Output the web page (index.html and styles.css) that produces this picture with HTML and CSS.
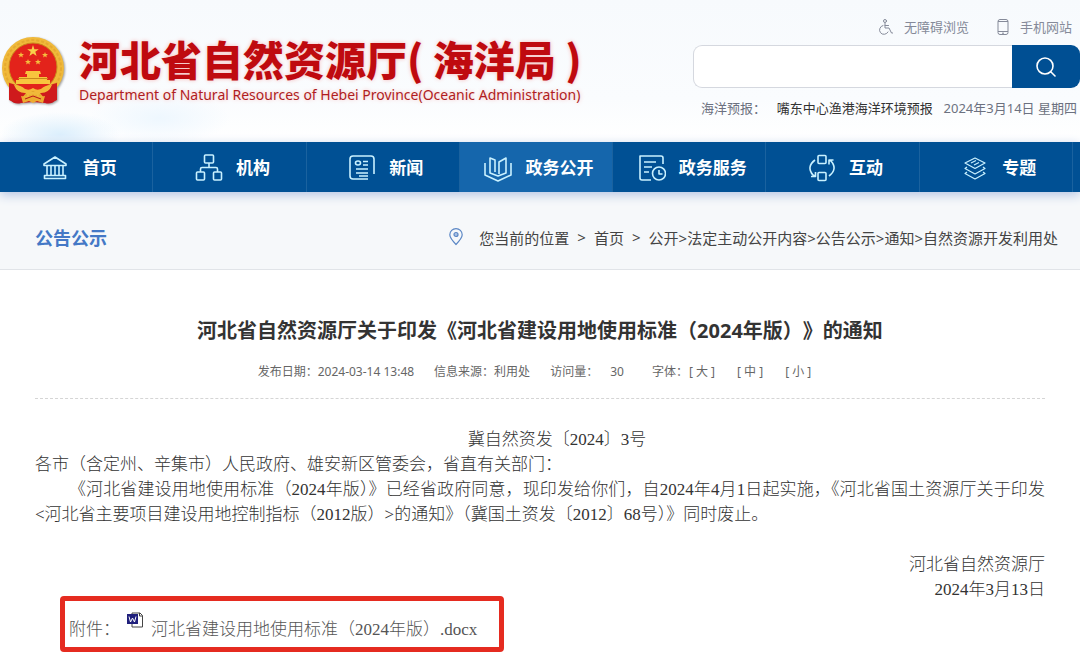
FILE: index.html
```html
<!DOCTYPE html>
<html lang="zh-CN">
<head>
  <meta charset="UTF-8">
  <meta name="viewport" content="width=device-width, initial-scale=1.0">
  <title>河北省自然资源厅(海洋局)</title>
  <link rel="stylesheet" href="styles.css">
</head>
<body>
  <!-- 头部 -->
  <header class="header">
    <a class="logo" href="#">
      <svg class="emblem" viewBox="0 0 64 70" aria-hidden="true">
        <path d="M10 47 L9 64 Q14 69 20 67 L32 66 L44 67 Q50 69 55 64 L56 47z" fill="#c8161d"/>
        <circle cx="32" cy="32" r="31" fill="#f0b93a"/>
        <circle cx="32" cy="32" r="28" fill="none" stroke="#e5aa30" stroke-width="2" stroke-dasharray="3 2"/>
        <circle cx="32" cy="31" r="24" fill="#e3231b" stroke="#c98a1c" stroke-width="1"/>
        <path d="M32 9l1.4 4.2h4.4l-3.5 2.6 1.3 4.2-3.6-2.6-3.6 2.6 1.3-4.2-3.5-2.6h4.4z" fill="#f8d04a"/>
        <g fill="#f5bd3e">
          <path d="M20 16l.8 2h2.2l-1.7 1.4.6 2.2-1.9-1.3-1.9 1.3.6-2.2L17 18h2.2z"/>
          <path d="M44 16l.8 2h2.2l-1.7 1.4.6 2.2-1.9-1.3-1.9 1.3.6-2.2L41 18h2.2z"/>
          <path d="M27 23l.8 2h2.2l-1.7 1.4.6 2.2-1.9-1.3-1.9 1.3.6-2.2L24 25h2.2z"/>
          <path d="M37 23l.8 2h2.2l-1.7 1.4.6 2.2-1.9-1.3-1.9 1.3.6-2.2L34 25h2.2z"/>
        </g>
        <path d="M25 35h14l1 3h-2v3h8v3h3v4H15v-4h3v-3h8v-3h-2z" fill="#f8c53e"/>
        <path d="M17 42.500h30" stroke="#c98a1c"/>
        <path d="M8 47q7 1 11 6l6 4-5 6q-6 4-12 1zM56 47q-7 1-11 6l-6 4 5 6q6 4 12 1z" fill="#cf1a1c"/>
        <path d="M13 49q7 0 11 4 4 2 8-1 4 3 8 1 4-4 11-4-3 8-11 8-5 0-8-2-3 2-8 2-8 0-11-8z" fill="#f4b838"/>
        <path d="M20 60l7 1 5-3 5 3 7-1-2 7-6-2-4 2-4-2-6 2z" fill="#edaa30"/>
        <path d="M24 63l8-3 8 3" stroke="#b9151a" fill="none"/>
      </svg>
      <span class="logo-text">
        <strong class="logo-cn">河北省自然资源厅( 海洋局 )</strong>
        <span class="logo-en">Department of Natural Resources of Hebei Province(Oceanic Administration)</span>
      </span>
    </a>
    <div class="tools">
      <div class="links">
        <a href="#">
          <svg width="16" height="16" viewBox="0 0 16 16" fill="none" stroke="#858a99" stroke-linecap="round" stroke-linejoin="round"><circle cx="8" cy="2" r="1.500"/><path d="M8 4v5h4l2.500 5H16M8 6.500h3.500M6 6.500a4.500 4.500 0 1 0 5 6.500"/></svg>
          无障碍浏览
        </a>
        <a href="#">
          <svg width="12" height="16" viewBox="0 0 12 16" fill="none" stroke="#858a99"><rect x="1" y=".5" width="10" height="15" rx="2"/><path d="M1 2.500h10M1 12.500h10M5 14.200h2"/></svg>
          手机网站
        </a>
      </div>
      <form class="search" action="#">
        <input type="text" aria-label="搜索">
        <button type="submit" aria-label="搜索">
          <svg width="22" height="22" viewBox="0 0 22 22" fill="none" stroke="#fff" stroke-width="1.600" stroke-linecap="round"><circle cx="10" cy="10" r="8"/><path d="M16 16l4 4"/></svg>
        </button>
      </form>
      <div class="forecast">
        <span>海洋预报：</span>
        <a href="#">嘴东中心渔港海洋环境预报</a>
        <span>2024年3月14日 星期四</span>
      </div>
    </div>
  </header>

  <!-- 导航 -->
  <nav class="nav">
    <a href="#">
      <svg viewBox="0 0 28 28"><path d="M2 10L13 3l11 7v1.500H2zM2.500 21.500h21v3h-21zM5 12v9M9 12v9M13 12v9M17 12v9M21 12v9"/></svg>
      首页
    </a>
    <a href="#">
      <svg viewBox="0 0 28 28"><rect x="9.500" y="1" width="9" height="8" rx="1"/><rect x="1.500" y="18" width="8" height="8" rx="1"/><rect x="18.500" y="18" width="8" height="8" rx="1"/><path d="M14 9v4.500M5.500 18v-3q0-1.500 1.500-1.500h14q1.500 0 1.500 1.500v3"/></svg>
      机构
    </a>
    <a href="#">
      <svg viewBox="0 0 28 28"><path d="M20 25H5q-3 0-3-3V5q0-3 3-3h18q3 0 3 3v15M8 15h12M8 19h12M11 22h9M15 7.500h5M15 11h5"/><ellipse cx="10" cy="9" rx="2.500" ry="2"/></svg>
      新闻
    </a>
    <a class="cur" href="#">
      <svg viewBox="0 0 28 28"><path d="M1 9v12l13 6 13-6V9M11 18V6L6 4v15l8 3 8-3V4l-7 4v12"/></svg>
      政务公开
    </a>
    <a href="#">
      <svg viewBox="0 0 28 28"><path d="M13 26H4q-2 0-2-2V2h21q2 0 2 2v6M6 8h12M6 13h8M6 18h5"/><circle cx="21" cy="19.500" r="6.500"/><path d="M21 16v4h3.500"/></svg>
      政务服务
    </a>
    <a href="#">
      <svg viewBox="0 0 28 28"><rect x="10" y="1.500" width="8" height="8" rx="1"/><rect x="10" y="18.500" width="8" height="8" rx="1"/><path d="M7 6q-9 7-2 15l2 1M3 22.500h4.500V18M21 22q9-7 2-15l-2-1M25.500 6H21v4.500"/></svg>
      互动
    </a>
    <a href="#">
      <svg viewBox="0 0 28 28" class="thin"><path d="M14 4l10 5-10 5.500L4 9zM10 9l5-2.500M13 11l5-2.500M6 13l-2 1.500L14 20l10-5.500-2-1.500M6 18l-2 1.500L14 25l10-5.500-2-1.500"/></svg>
      专题
    </a>
  </nav>

  <!-- 当前位置 -->
  <div class="position">
    <h2>公告公示</h2>
    <div class="crumbs">
      <svg width="14" height="18" viewBox="0 0 14 18" fill="none" stroke="#5b87c5" stroke-width="1.200"><path d="M7 16.500Q.8 10 .8 6.800a6.200 6.200 0 0 1 12.400 0Q13.200 10 7 16.500z"/><circle cx="7" cy="6.500" r="2" fill="#a9c0e2"/></svg>
      <span class="here">您当前的位置</span>
      <span>&gt;</span>
      <a href="#">首页</a>
      <span>&gt;</span>
      <span><a href="#">公开</a>&gt;<a href="#">法定主动公开内容</a>&gt;<a href="#">公告公示</a>&gt;<a href="#">通知</a>&gt;<a href="#">自然资源开发利用处</a></span>
    </div>
  </div>

  <!-- 正文 -->
  <main class="article">
    <h1>河北省自然资源厅关于印发《河北省建设用地使用标准（2024年版）》的通知</h1>
    <div class="meta">
      <span>发布日期：2024-03-14 13:48</span>
      <span>信息来源：利用处</span>
      <span class="views">访问量：<span>30</span></span>
      <div class="size">
        <span>字体：</span>
        <button type="button">[ 大 ]</button>
        <button type="button">[ 中 ]</button>
        <button type="button">[ 小 ]</button>
      </div>
    </div>
    <div class="content">
      <p class="number">冀自然资发〔2024〕3号</p>
      <p>各市（含定州、辛集市）人民政府、雄安新区管委会，省直有关部门：</p>
      <p class="indent">《河北省建设用地使用标准（2024年版）》已经省政府同意，现印发给你们，自2024年4月1日起实施，《河北省国土资源厅关于印发&lt;河北省主要项目建设用地控制指标（2012版）&gt;的通知》（冀国土资发〔2012〕68号）》同时废止。</p>
      <p class="sign">河北省自然资源厅<br>2024年3月13日</p>
      <div class="attach">
        <span>附件：</span>
        <svg width="16" height="16" viewBox="0 0 16 16"><path d="M5 1h8l2.500 2.500V15H5z" fill="#fff" stroke="#444"/><path d="M12.500 1v3h3" fill="none" stroke="#444"/><path d="M0 2h11v10H0z" fill="#20207c"/><path d="M2 4.500L3.500 10 5.500 6l2 4L9 4.500" fill="none" stroke="#fff"/></svg>
        <a href="#">河北省建设用地使用标准（2024年版）.docx</a>
      </div>
    </div>
  </main>
</body>
</html>
```

FILE: styles.css
```css
*{
	margin: 0;
	padding: 0;
	box-sizing: border-box;
}
body{
	font-family: "Noto Sans", "Noto Sans CJK SC", sans-serif;
	font-size: 13px;
	color: #333;
	background-color: #fff;
}
a{
	color: inherit;
	text-decoration: none;
}
svg{
	flex: none;
}

/* 头部 */
.header{
	display: flex;
	justify-content: space-between;
	height: 142px;
	background:
		radial-gradient(ellipse 60px 22px at 60px 134px, #dceffc, transparent),
		radial-gradient(ellipse 70px 26px at 160px 118px, #eef7fe, transparent),
		linear-gradient(#f7fafd, #fafcfe 70%, #fff);
}
.logo{
	display: flex;
	align-items: center;
	gap: 14px;
	padding-left: 1px;
}
.emblem{
	width: 64px;
	height: 70px;
	filter: drop-shadow(1px 1px 1px #999);
}
.logo-text{
	display: flex;
	flex-direction: column;
	padding-bottom: 8px;
	white-space: nowrap;
	text-shadow: 0 0 4px #f6bcbc;
}
.logo-cn{
	font-family: "Noto Sans CJK SC", sans-serif;
	font-size: 41px;
	font-weight: 900;
	line-height: 56px;
	color: #bf0a0f;
}
.logo-en{
	font-size: 14px;
	line-height: 18px;
	color: #b01c22;
}
.tools{
	width: 387px;
	padding-top: 18px;
}
.links{
	display: flex;
	justify-content: flex-end;
	gap: 28px;
	padding-right: 8px;
	line-height: 18px;
	color: #858a99;
}
.links a{
	display: flex;
	align-items: center;
	gap: 11px;
}
.search{
	display: flex;
	height: 43px;
	margin-top: 9px;
}
.search input{
	flex: 1;
	min-width: 0;
	padding: 0 12px;
	border: 1px solid #d5d8df;
	border-right: 0;
	border-radius: 9px 0 0 9px;
	background-color: #fff;
	font-size: 14px;
}
.search button{
	display: flex;
	align-items: center;
	justify-content: center;
	width: 68px;
	border: 0;
	border-radius: 0 9px 9px 0;
	background-color: #004f93;
}
.forecast{
	display: flex;
	justify-content: space-between;
	margin-top: 10px;
	padding: 0 3px 0 8px;
	line-height: 20px;
	color: #6c7180;
	white-space: nowrap;
}
.forecast a{
	color: #333;
}

/* 导航 */
.nav{
	display: grid;
	grid-template-columns: repeat(7, 1fr);
	position: relative;
	height: 50px;
	padding-right: 7px;
	background-color: #005094;
	box-shadow: 0 3px 10px #b4c5e4;
}
.nav a{
	display: flex;
	align-items: center;
	justify-content: center;
	gap: 13px;
	padding: 1px 0 0 6px;
	border-right: 1px solid #1a629f;
	font-size: 17px;
	line-height: 24px;
	font-weight: bold;
	color: #fff;
	white-space: nowrap;
}
.nav a.cur{
	background-color: #1566ac;
}
.nav svg{
	width: 28px;
	height: 28px;
	fill: none;
	stroke: #c9f1ff;
	stroke-width: 1.6;
	stroke-linejoin: round;
}
.nav .thin{
	stroke-width: 1.2;
}

/* 当前位置 */
.position{
	display: flex;
	align-items: center;
	justify-content: space-between;
	height: 78px;
	padding: 13px 22px 0 35px;
	border-bottom: 1px solid #e1e4e8;
	background-color: #f6f8fa;
}
.position h2{
	font-size: 18px;
	color: #4478c6;
}
.crumbs{
	display: flex;
	align-items: center;
	gap: 8px;
	font-size: 15px;
	color: #444;
	white-space: nowrap;
}
.crumbs .here{
	margin-left: 8px;
}

/* 正文 */
.article{
	padding: 44px 35px 0;
}
.article h1{
	font-size: 20px;
	line-height: 34px;
	text-align: center;
	text-spacing-trim: space-all;
	color: #333;
}
.meta{
	display: flex;
	justify-content: center;
	gap: 20px;
	padding: 15px 10px 17px 0;
	border-bottom: 1px dashed #d5d5d5;
	font-size: 12px;
	line-height: 18px;
	color: #666;
}
.views span{
	margin: 0 8px 0 12px;
}
.size{
	display: flex;
}
.size button{
	margin-right: 20px;
	padding: 0 1px;
	border: 0;
	background: none;
	font: inherit;
	color: inherit;
	cursor: pointer;
}
.size button:last-child{
	margin-right: 0;
}
.content{
	padding-top: 28px;
	font-family: "Liberation Serif", "Noto Sans CJK SC", serif;
	font-size: 17px;
	font-weight: 300;
	line-height: 25px;
	color: #333;
}
.number{
	padding-left: 34px;
	text-align: center;
}
.indent{
	text-indent: 2em;
	text-align: justify;
}
.sign{
	margin-top: 25px;
	text-align: right;
}
.attach{
	display: flex;
	width: fit-content;
	margin: -6px 0 0 25px;
	padding: 16px 22px 5px 4px;
	border: 5px solid #e52b20;
	border-radius: 4px;
	color: #555;
}
.attach svg{
	margin: -5px 8px 0 7px;
}
```
